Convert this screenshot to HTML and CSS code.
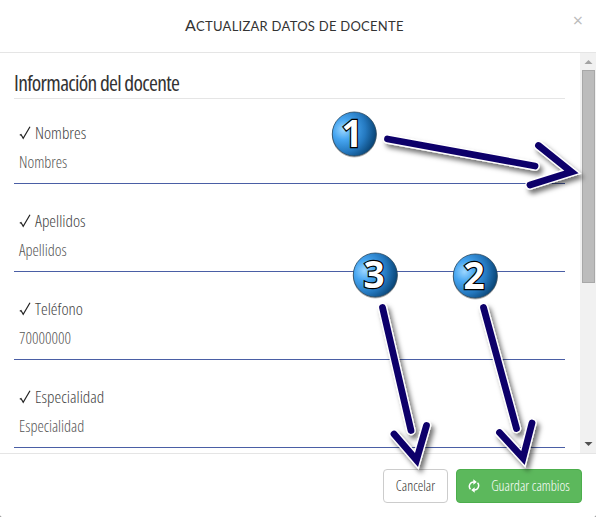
FILE: index.html
```html
<!DOCTYPE html>
<html lang="es">
<head>
<meta charset="utf-8">
<title>Actualizar datos de docente</title>
<link rel="stylesheet" href="styles.css">
</head>
<body>
<div class="modal">
  <header class="modal-header"><h4 class="title">Actualizar datos de docente</h4><span class="close">×</span></header>
  <div class="modal-body">
    <main class="content">
      <h3 class="section-title"><span>Información del docente</span></h3>
      <div class="field"><label><svg class="check" viewBox="0 0 12 14"><path d="M.8 9.2 2 8.5 4.2 12.3 11 .8"/></svg><span>Nombres</span></label><div class="value">Nombres</div></div>
      <div class="field"><label><svg class="check" viewBox="0 0 12 14"><path d="M.8 9.2 2 8.5 4.2 12.3 11 .8"/></svg><span>Apellidos</span></label><div class="value">Apellidos</div></div>
      <div class="field"><label><svg class="check" viewBox="0 0 12 14"><path d="M.8 9.2 2 8.5 4.2 12.3 11 .8"/></svg><span>Teléfono</span></label><div class="value">70000000</div></div>
      <div class="field"><label><svg class="check" viewBox="0 0 12 14"><path d="M.8 9.2 2 8.5 4.2 12.3 11 .8"/></svg><span>Especialidad</span></label><div class="value">Especialidad</div></div>
    </main>
    <div class="scrollbar">
      <svg class="sb-arrow" viewBox="0 0 16 17"><path fill="#a3a3a3" d="M4.500 11 8.500 7 12.500 11z"/></svg>
      <div class="thumb"></div>
      <svg class="sb-arrow" viewBox="0 0 16 17"><path fill="#505050" d="M4.500 6 8.500 10 12.500 6z"/></svg>
    </div>
  </div>
  <footer class="modal-footer">
    <button class="btn cancel">Cancelar</button>
    <button class="btn save"><svg class="refresh" viewBox="0 0 12 14"><path class="arc" d="M2.500 10.200A4.300 4.300 0 0 1 5.800 3M9.500 3.800A4.300 4.300 0 0 1 6.200 11"/><path class="tip" d="M5.300.2 8.800 3 5.300 5.800zM6.700 8.200 3.200 11 6.700 13.800z"/></svg><span>Guardar cambios</span></button>
  </footer>
</div>
<svg class="notes" viewBox="0 0 596 517">
  <defs>
    <radialGradient id="ball" cx=".25" cy=".4" r=".78"><stop offset="0" stop-color="#9bd6ff"/><stop offset=".3" stop-color="#46a5f0"/><stop offset=".65" stop-color="#2579c0"/><stop offset="1" stop-color="#07406f"/></radialGradient>
    <filter id="shadow" x="-30%" y="-30%" width="160%" height="170%"><feDropShadow dx="3" dy="4" stdDeviation="2.500" flood-color="#000" flood-opacity=".55"/></filter>
    <path id="a1" d="M387.500 139 535 166M538.500 145.500 571.500 172 530 185"/>
    <path id="a2" d="M483.500 307.500 516.500 428.500M499.500 432.500 523 458 532 423"/>
    <path id="a3" d="M382.500 307.500 411 430.500M394 434 416.500 460 426.500 425.500"/>
  </defs>
  <g filter="url(#shadow)"><use href="#a1" class="halo"/><use href="#a1" class="ink"/></g>
  <g filter="url(#shadow)"><use href="#a2" class="halo"/><use href="#a2" class="ink"/></g>
  <g filter="url(#shadow)"><use href="#a3" class="halo"/><use href="#a3" class="ink"/></g>
  <g class="ball"><circle cx="354.300" cy="134" r="22"/><circle cx="475.300" cy="276" r="22"/><circle cx="375.300" cy="275" r="22"/></g>
  <g class="digit"><text x="352" y="147">1</text><text x="474" y="288.500">2</text><text x="374" y="287.500">3</text></g>
</svg>
</body>
</html>
```
FILE: styles.css
```css
* { box-sizing: border-box; }
body { margin: 0; background: #777; font-family: "Open Sans", sans-serif; font-stretch: 75%; font-weight: 300; color: #333; }
.modal { width: 596px; height: 517px; background: #fff; border-radius: 0 0 2px 2px; overflow: hidden; display: flex; flex-direction: column; }
.modal-header { height: 53px; border-bottom: 1px solid #e5e5e5; display: flex; padding-left: 185px; position: relative; }
.title { margin: 0; font: 400 13px/49px Lato, sans-serif; text-transform: uppercase; letter-spacing: .26px; color: #333; white-space: nowrap; }
.title::first-letter { font-size: 16px; }
.close { position: absolute; right: 13px; top: 10px; font: 400 18px/20px "Open Sans", sans-serif; color: #bbb; }
.modal-body { height: 400px; display: flex; }
.content { flex: 1; padding: 15px 15px 0 14px; overflow: hidden; }
.section-title { margin: 0; height: 31px; border-bottom: 1px solid #e5e5e5; font-size: 21.5px; line-height: 30px; font-weight: 500; letter-spacing: -.68px; white-space: nowrap; }
.field { height: 88px; border-bottom: 1px solid #4a5ea5; padding: 23px 0 0 5px; }
.section-title + .field { height: 85px; padding-top: 20px; }
.field label { display: flex; align-items: center; height: 26px; font-size: 17px; gap: 4px; color: #444; }
.check { width: 12px; height: 14px; margin-top: 2px; fill: none; stroke: #222; stroke-width: 1.2; }
.value { font-size: 16px; line-height: 32px; margin-top: 1px; color: #555; }
.scrollbar { width: 16px; background: #f1f1f1; display: flex; flex-direction: column; }
.sb-arrow { width: 16px; height: 17px; }
.thumb { width: 13px; height: 213px; margin: 0 0 auto 2px; background: #bcbcbc; border: 1px solid #a8a8a8; }
.modal-footer { flex: 1; border-top: 1px solid #e5e5e5; padding: 15px 14px 0; display: flex; justify-content: flex-end; gap: 8px; }
.btn { height: 34px; border: 1px solid #ccc; border-radius: 4px; background: #fff; font: inherit; font-size: 14px; color: #333; padding: 0 0 1px; display: flex; align-items: center; justify-content: center; white-space: nowrap; }
.cancel { width: 65px; }
.save { width: 126px; background: #5cb85c; border-color: #4cae4c; color: #fff; gap: 11px; }
.refresh { width: 12px; height: 14px; }
.arc { fill: none; stroke: #fff; stroke-width: 1.5; }
.tip { fill: #fff; }
.notes { position: absolute; left: 0; top: 0; width: 596px; height: 517px; pointer-events: none; }
.halo, .ink { fill: none; stroke-linecap: round; stroke-linejoin: miter; }
.halo { stroke: #fff; stroke-width: 9.5; }
.ink { stroke: #10006b; stroke-width: 6.8; }
.ball circle { fill: url(#ball); stroke: #28485f; stroke-width: .8; filter: drop-shadow(0 1px .5px #0005); }
.digit { font: 700 37px "Open Sans", sans-serif; font-stretch: 92%; text-anchor: middle; fill: #fff; stroke: #000; stroke-width: 2.4; stroke-linejoin: miter; paint-order: stroke; }
```
